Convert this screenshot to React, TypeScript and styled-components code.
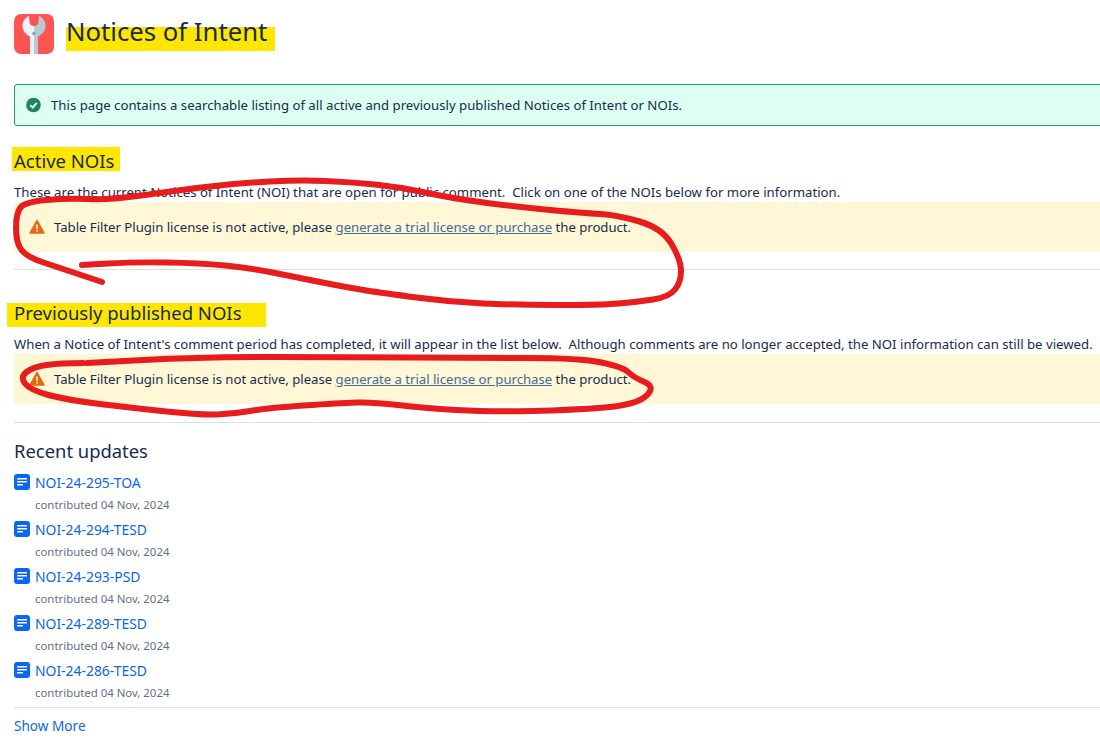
import React from "react";
import styled, { createGlobalStyle } from "styled-components";

const GlobalStyle = createGlobalStyle`
  html, body {
    margin: 0;
    padding: 0;
    background: #fff;
    overflow: hidden;
  }
  body {
    font-family: "Noto Sans", "Open Sans", sans-serif;
    font-size: 13.2px;
    color: #172b4d;
  }
`;

const Page = styled.div`
  position: relative;
  width: 1100px;
  height: 738px;
  overflow: hidden;
  padding: 14px 0 0 14px;
  box-sizing: border-box;
`;
const Content = styled.div`
  width: 1100px;
`;
const TitleRow = styled.header`
  display: flex;
  align-items: flex-start;
  gap: 12px;
  height: 70px;
`;
const Title = styled.h1`
  margin: 13px 0 0 0;
  box-sizing: border-box;
  height: 24px;
  padding: 0 8px 14px 0;
  background: #ffe600;
  font-size: 25.7px;
  line-height: 10px;
  font-weight: 400;
  color: #172b4d;
  display: flex;
  align-items: center;
`;
const Panel = styled.div<{ $tone: "success" | "warning" }>`
  display: flex;
  align-items: center;
  gap: 9px;
  box-sizing: border-box;
  border-radius: 3px;
  padding-left: ${(p) => (p.$tone === "success" ? "11px" : "15px")};
  height: ${(p) => (p.$tone === "success" ? "42px" : "50px")};
  background: ${(p) => (p.$tone === "success" ? "#dcfff1" : "#fff7d6")};
  border: ${(p) => (p.$tone === "success" ? "1px solid #22a06b" : "none")};
`;
const WarningText = styled.span`
  letter-spacing: -0.035px;
`;
const Section = styled.h2<{ $inset: number; $pad: number; $shift: number }>`
  display: inline-flex;
  align-items: center;
  box-sizing: border-box;
  height: 24px;
  margin: 0 0 0 -${(p) => p.$inset}px;
  padding: ${(p) => Math.max(p.$shift, 0)}px ${(p) => p.$pad}px ${(p) => Math.max(-p.$shift, 0)}px ${(p) => p.$inset}px;
  background: #ffe600;
  font-size: 18.5px;
  font-weight: 400;
  color: #172b4d;
`;
const SectionRow = styled.div<{ $top: number }>`
  margin-top: ${(p) => p.$top}px;
  height: 24px;
`;
const Intro = styled.p<{ $top: number }>`
  margin: ${(p) => p.$top}px 0 0 0;
  height: 19px;
  line-height: 19px;
  white-space: pre;
`;
const Rule = styled.hr<{ $after: number }>`
  border: 0;
  border-top: 1px solid #dcdfe4;
  margin: ${(p) => p.$after}px 0 0 0;
`;
const PlainLink = styled.a`
  color: #3f6b9c;
  text-decoration: underline;
`;
const Recent = styled.h3`
  margin: 15px 0 0 0;
  font-size: 18.4px;
  line-height: 26px;
  font-weight: 400;
  color: #172b4d;
`;
const UpdateList = styled.ul`
  list-style: none;
  margin: 6px 0 0 0;
  padding: 0;
`;
const UpdateItem = styled.li`
  height: 47px;
`;
const UpdateLink = styled.a`
  display: flex;
  align-items: center;
  gap: 5px;
  height: 24px;
  color: #0c66e4;
  font-size: 13.9px;
`;
const UpdateMeta = styled.div`
  margin-left: 21px;
  height: 22px;
  line-height: 22px;
  font-size: 11.4px;
  color: #626f86;
`;
const ListRule = styled.hr`
  border: 0;
  border-top: 1px solid #dcdfe4;
  margin: 2px 0 0 0;
`;
const More = styled.a`
  display: block;
  margin-top: 8px;
  font-size: 13.6px;
  color: #0c66e4;
`;
const Overlay = styled.svg`
  position: absolute;
  left: 0;
  top: 0;
  pointer-events: none;
`;

const updates = [
  "NOI-24-295-TOA",
  "NOI-24-294-TESD",
  "NOI-24-293-PSD",
  "NOI-24-289-TESD",
  "NOI-24-286-TESD",
];

const scribbleOne: [number, number][] = [
  [102, 282], [60, 268], [27, 257], [16, 243], [16, 213], [25, 202], [67, 198], [110, 200],
  [180, 190], [240, 183], [300, 180], [350, 182], [400, 187], [450, 198], [517, 207], [583, 213],
  [617, 215], [662, 228], [681, 260], [681, 282], [669, 297], [637, 302], [600, 305], [517, 305],
  [450, 302], [383, 293], [350, 288], [300, 278], [250, 268], [200, 263], [133, 262], [82, 265],
];
const scribbleTwo: [number, number][] = [
  [83, 363], [60, 363], [33, 367], [20, 377], [30, 390], [67, 400], [133, 408], [200, 415],
  [233, 414], [267, 408], [340, 403], [373, 402], [423, 408], [490, 412], [573, 410], [636, 405],
  [656, 387], [633, 377], [623, 367], [580, 358], [473, 358], [350, 357], [200, 357], [87, 363],
];

// smooths the hand drawn line through midpoints
function smooth(points: [number, number][]) {
  let d = `M${points[0][0]} ${points[0][1]}`;
  for (let i = 1; i < points.length - 1; i++) {
    const mx = (points[i][0] + points[i + 1][0]) / 2;
    const my = (points[i][1] + points[i + 1][1]) / 2;
    d += ` Q${points[i][0]} ${points[i][1]} ${mx} ${my}`;
  }
  const last = points[points.length - 1];
  return d + ` L${last[0]} ${last[1]}`;
}

function WrenchLogo() {
  return (
    <svg width="40" height="40" viewBox="0 0 40 40" style={{ flexShrink: 0 }}>
      <rect width="40" height="40" rx="7" fill="#ff5552" />
      <path d="M15 2 C10.500 4 8.500 8 8.500 12 C8.500 17 12 20.500 16 22.500 L16 40 L20 40 L20 12 C17.500 12 15.500 10.500 15.500 8 Z" fill="#eef1f5" />
      <path d="M25 2 C29.500 4 31.500 8 31.500 12 C31.500 17 28 20.500 24 22.500 L24 40 L20 40 L20 12 C22.500 12 24.500 10.500 24.500 8 Z" fill="#b8c8d4" />
      <circle cx="20" cy="19.500" r="1.800" fill="#8fa3b1" />
    </svg>
  );
}

function CheckIcon() {
  return (
    <svg width="16" height="16" viewBox="0 0 16 16" style={{ flexShrink: 0 }}>
      <circle cx="7.500" cy="8" r="7.300" fill="#1f845a" />
      <path d="M4.300 8.200 L6.700 10.500 L10.800 5.900" fill="none" stroke="#dcfff1" strokeWidth="2" />
    </svg>
  );
}

function WarnIcon() {
  return (
    <svg width="16" height="16" viewBox="0 0 16 16" style={{ flexShrink: 0 }}>
      <path d="M8 1.500 L15 14 L1 14 Z" fill="#e56910" stroke="#e56910" strokeWidth="1.500" strokeLinejoin="round" />
      <rect x="7.200" y="5.500" width="1.600" height="4.500" fill="#fff7d6" />
      <rect x="7.200" y="11" width="1.600" height="1.600" fill="#fff7d6" />
    </svg>
  );
}

function PageIcon() {
  return (
    <svg width="16" height="16" viewBox="0 0 16 16" style={{ flexShrink: 0 }}>
      <rect width="16" height="16" rx="3" fill="#0c66f4" />
      <rect x="3" y="4" width="10" height="1.500" rx="0.500" fill="#fff" />
      <rect x="3" y="7" width="10" height="1.500" rx="0.500" fill="#fff" />
      <rect x="3" y="10" width="6" height="1.500" rx="0.500" fill="#fff" />
    </svg>
  );
}

function LicenseWarning() {
  return (
    <Panel $tone="warning">
      <WarnIcon />
      <WarningText>
        Table Filter Plugin license is not active, please{" "}
        <PlainLink>generate a trial license or purchase</PlainLink> the product.
      </WarningText>
    </Panel>
  );
}

export default function App() {
  return (
    <Page>
      <GlobalStyle />
      <Content>
        <TitleRow>
          <WrenchLogo />
          <Title>Notices of Intent</Title>
        </TitleRow>
        <Panel $tone="success">
          <CheckIcon />
          <span>This page contains a searchable listing of all active and previously published Notices of Intent or NOIs.</span>
        </Panel>
        <SectionRow $top={21}>
          <Section $inset={2} $pad={6} $shift={2}>Active NOIs</Section>
        </SectionRow>
        <Intro $top={12}>These are the current Notices of Intent (NOI) that are open for public comment.  Click on one of the NOIs below for more information.</Intro>
        <LicenseWarning />
        <Rule $after={17} />
        <SectionRow $top={33}>
          <Section $inset={7} $pad={24} $shift={-6}>Previously published NOIs</Section>
        </SectionRow>
        <Intro $top={8}>When a Notice of Intent's comment period has completed, it will appear in the list below.  Although comments are no longer accepted, the NOI information can still be viewed.</Intro>
        <LicenseWarning />
        <Rule $after={18} />
        <Recent>Recent updates</Recent>
        <UpdateList>
          {updates.map((name) => (
            <UpdateItem key={name}>
              <UpdateLink>
                <PageIcon />
                {name}
              </UpdateLink>
              <UpdateMeta>contributed 04 Nov, 2024</UpdateMeta>
            </UpdateItem>
          ))}
        </UpdateList>
        <ListRule />
        <More>Show More</More>
      </Content>
      <Overlay width="1100" height="738" viewBox="0 0 1100 738">
        <path d={smooth(scribbleOne)} fill="none" stroke="#e81c1c" strokeWidth="6" strokeLinecap="round" strokeLinejoin="round" />
        <path d={smooth(scribbleTwo)} fill="none" stroke="#e81c1c" strokeWidth="6" strokeLinecap="round" strokeLinejoin="round" />
      </Overlay>
    </Page>
  );
}
